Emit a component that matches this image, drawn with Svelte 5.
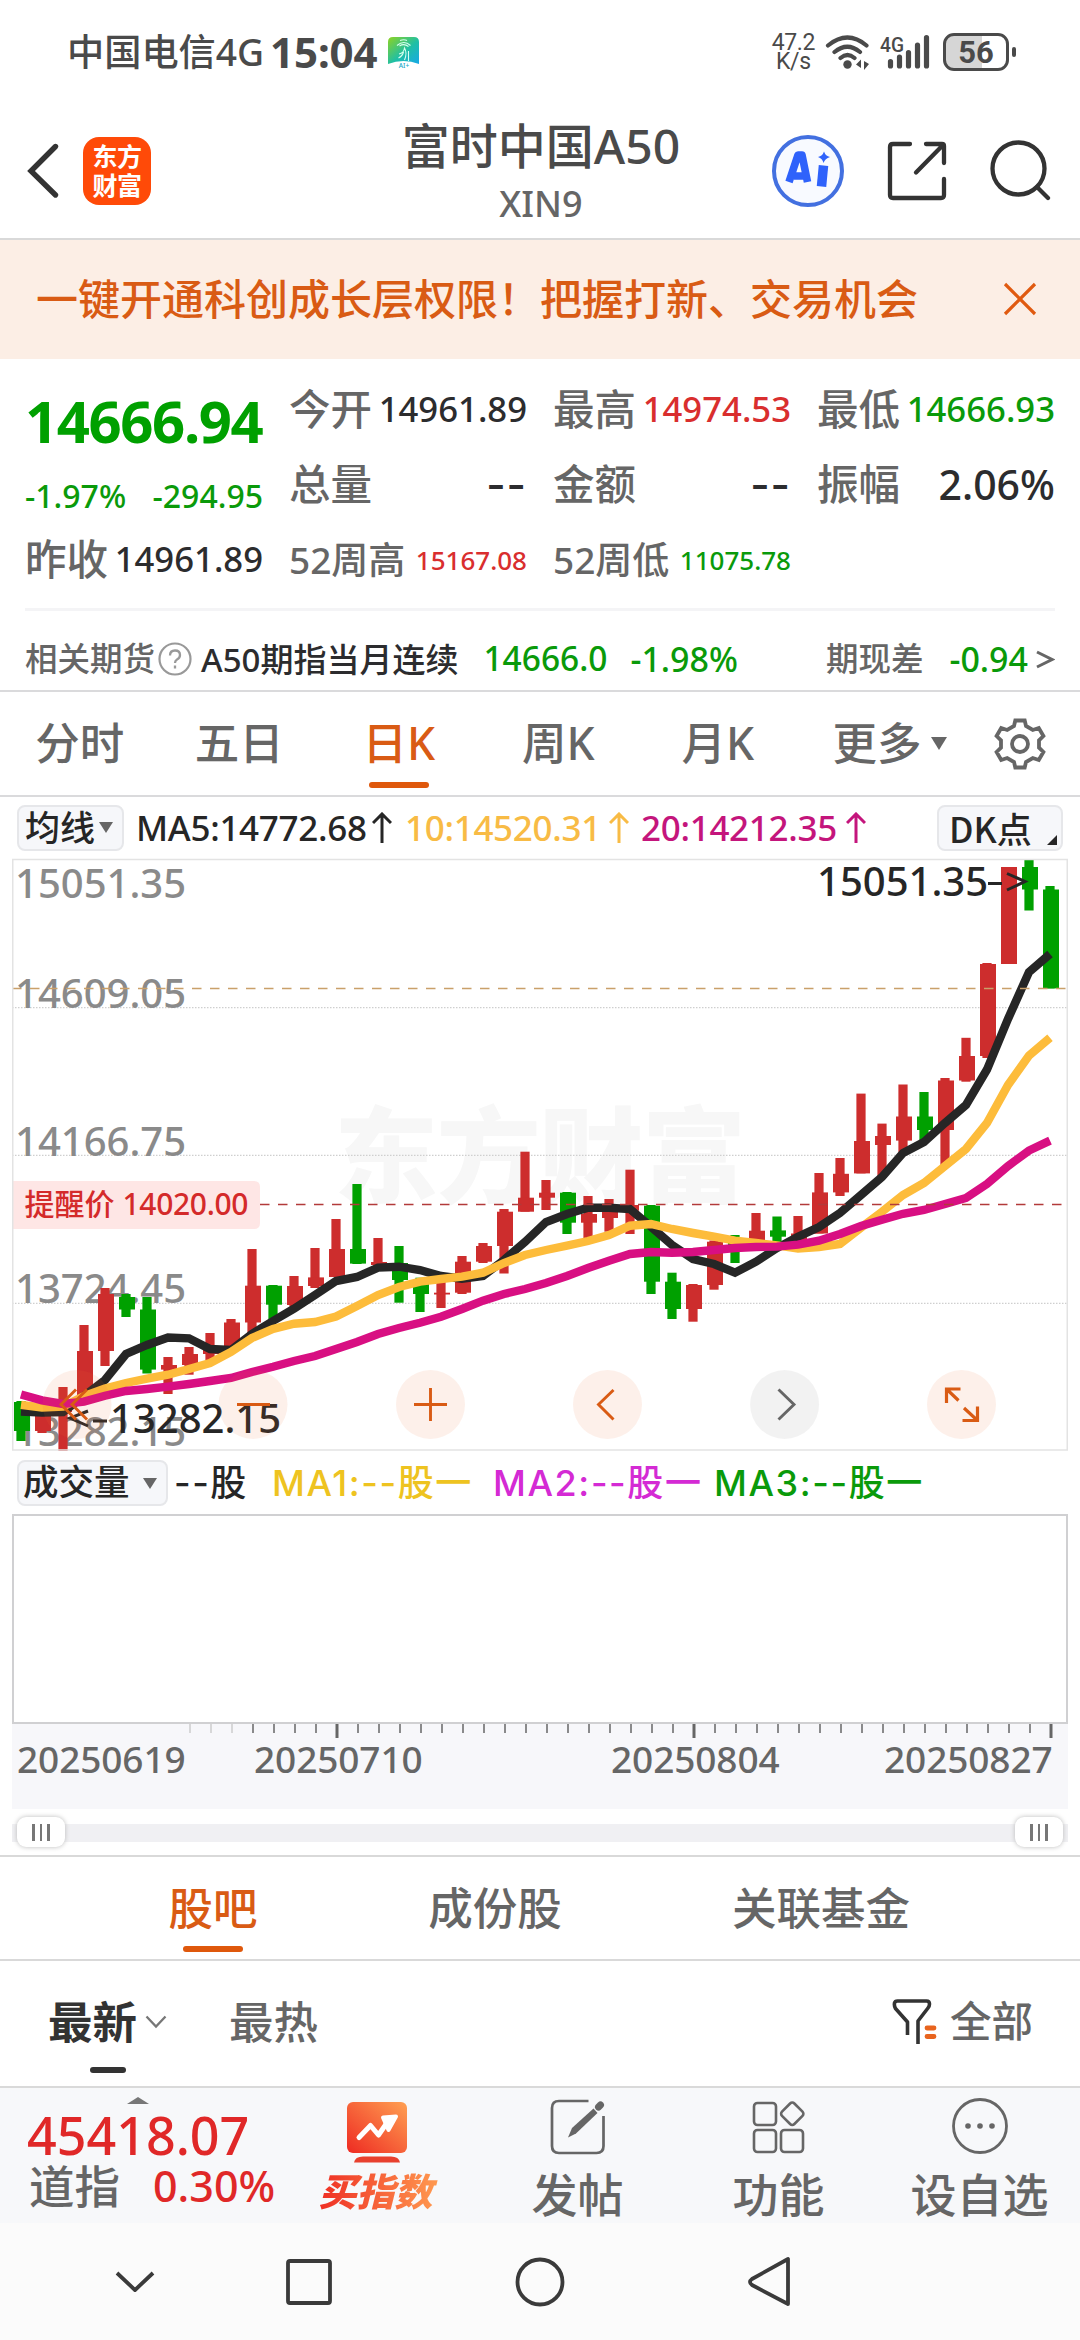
<script>
  const UP = '#cd2d2d';
  const DOWN = '#00a000';

  // [direction, body top, body bottom, wick top, wick bottom]
  const candles = [
    [0, 1402, 1431, 1401, 1441], [1, 1413, 1431, 1410, 1433], [1, 1402, 1412, 1387, 1451],
    [1, 1351, 1398, 1325, 1398], [1, 1294, 1351, 1288, 1366], [0, 1297, 1309.5, 1294, 1317],
    [0, 1309.5, 1369.6, 1297, 1373.5], [1, 1365, 1369.6, 1357, 1394], [1, 1354, 1365, 1347, 1374.7],
    [1, 1349, 1354, 1333, 1360], [1, 1322.5, 1349, 1319, 1349], [1, 1285.7, 1322.5, 1249, 1333],
    [0, 1285.7, 1304.7, 1285, 1320.5], [1, 1286, 1305, 1276, 1306.7], [1, 1277.4, 1286, 1248, 1288],
    [1, 1249, 1277, 1219, 1277], [0, 1249, 1263.6, 1184, 1264], [1, 1262, 1265, 1238, 1270],
    [0, 1263, 1280, 1246, 1302.7], [0, 1280, 1294, 1277.7, 1312], [1, 1292.7, 1294.5, 1281.7, 1308],
    [1, 1261.7, 1292.7, 1256, 1294], [1, 1246, 1261.7, 1243, 1263], [1, 1211.7, 1246, 1209, 1273.5],
    [1, 1197.7, 1211.7, 1151.7, 1211.7], [1, 1192.7, 1197.7, 1180, 1210], [0, 1192.7, 1222.7, 1192, 1234],
    [1, 1214, 1222.7, 1196, 1238], [1, 1211.7, 1218, 1199, 1231.7], [1, 1205, 1210.7, 1169.7, 1234],
    [0, 1205.7, 1281.7, 1205, 1294], [0, 1281.7, 1309, 1272.7, 1319], [1, 1285, 1309, 1284, 1321.7],
    [1, 1241.7, 1285, 1240.5, 1289.7], [0, 1240, 1247, 1235, 1263], [1, 1230.7, 1241.7, 1213, 1243],
    [0, 1230.4, 1236.7, 1216.5, 1246], [1, 1233.5, 1241, 1216, 1241], [1, 1192.4, 1233.5, 1173, 1233.5],
    [1, 1173.8, 1192.4, 1158, 1196], [1, 1141, 1173.4, 1093.6, 1173.4], [1, 1136, 1145, 1123.6, 1178],
    [1, 1116.5, 1140.6, 1084.5, 1152.5], [0, 1116.5, 1130, 1092, 1142.6], [1, 1080.5, 1130, 1078, 1166],
    [1, 1056, 1080.5, 1037.8, 1081.7], [1, 964, 1056, 963, 1058], [1, 867, 964, 867, 964],
    [0, 867, 889.5, 860, 910.5], [0, 889.5, 988.4, 886, 988.4]
  ];
  const ma5 = [1411.5, 1412.5, 1412, 1396, 1380, 1354, 1345, 1337.5, 1338.3, 1349, 1350, 1334, 1321, 1308.7, 1295, 1281, 1277, 1267.6, 1266.7, 1270, 1276, 1278.7, 1276, 1260, 1242, 1222, 1214, 1207.7, 1207.7, 1209, 1226.7, 1245, 1259, 1264, 1272.7, 1261.7, 1248, 1236.7, 1227, 1213, 1195, 1177, 1153, 1142, 1123, 1105, 1069.5, 1019, 972, 954];
  const ma10 = [1404.8, 1407.5, 1406.7, 1396, 1388.5, 1383, 1378.7, 1374.7, 1369, 1363, 1352, 1338, 1329, 1323.7, 1322, 1316.6, 1306, 1295, 1287, 1281.7, 1279, 1276.7, 1272.7, 1263, 1255, 1250, 1245.7, 1241, 1235, 1225.7, 1224, 1229, 1233, 1236.7, 1240.7, 1243, 1245.4, 1248.6, 1247, 1244, 1227.6, 1211.8, 1195, 1183, 1166, 1149, 1123, 1085, 1055.6, 1037.8];
  const ma20 = [1394.5, 1400.4, 1404, 1401.6, 1395.7, 1391, 1389, 1386.6, 1384, 1381, 1378, 1372, 1366.8, 1361, 1356, 1349, 1342, 1334, 1328, 1322.7, 1316.7, 1309, 1300.7, 1294, 1289, 1283, 1276, 1268, 1260.7, 1254, 1252, 1252.7, 1252, 1250, 1248, 1247, 1246.6, 1244.6, 1240.7, 1234, 1226, 1219.7, 1213.8, 1210, 1204, 1198, 1184, 1166, 1150.5, 1140.6];
  const cx = (i) => 21 + 21 * i;
  const points = (ys) => ys.map((y, i) => `${cx(i)},${y}`).join(' ');

  const levels = [['15051.35', 898], ['14609.05', 1008], ['14166.75', 1156], ['13724.45', 1303], ['13282.15', 1446]];
  const ticks = Array.from({ length: 42 }, (_, i) => ({
    x: 1051 - 21 * i,
    major: i % 17 === 0,
    faint: i > 38
  }));
  const quotes = [
    ['今开', '14961.89', 'dark'], ['最高', '14974.53', 'red'], ['最低', '14666.93', 'green'],
    ['总量', '--', 'dark dash'], ['金额', '--', 'dark dash'], ['振幅', '2.06%', 'dark big']
  ];
</script>

<div class="screen">
  <div class="status">
    <span class="carrier">中国电信4G</span>
    <span class="clock">15:04</span>
    <svg class="app" width="31" height="31" viewBox="0 0 31 31">
      <defs><linearGradient id="ag" x1="0" y1="0" x2="1" y2="1"><stop offset="0" stop-color="#8ed321" /><stop offset=".55" stop-color="#1fbfa5" /><stop offset="1" stop-color="#17a8e8" /></linearGradient></defs>
      <path d="M5 0h21q5 0 5 5v22q-15.500 -6 -31 0V5q0-5 5-5z" fill="url(#ag)" />
      <path d="M12 3.500q4-1.500 7 0M9 8.500q7-6 13.500 0M11.500 9q4.500-3 9 .5M11 17q5-1 5.500-6q3 5 0 12M10.500 21q4-2 5-6M20.500 14v10" fill="none" stroke="#d8fff0" stroke-width="1.100" />
      <text x="16" y="30.500" text-anchor="middle" font-size="6.500" fill="#17a8c8">AI+</text>
    </svg>
    <span class="grow"></span>
    <div class="speed"><span>47.2</span><span>K/s</span></div>
    <svg class="wifi" width="46" height="36" viewBox="0 0 46 36" fill="none" stroke="#4a4a4a" stroke-width="4.200" stroke-linecap="round">
      <path d="M3 11.500q19.500-16 38.500 0M9.500 18q12.800-10.500 25.500 0M15.500 24q7-6 14 0" />
      <circle cx="22.500" cy="30.500" r="4.200" fill="#4a4a4a" stroke="none" />
      <path d="M36 25.500v8.500l-5-3.500zM39 27v9l5-6z" fill="#4a4a4a" stroke="none" />
    </svg>
    <svg class="signal" width="52" height="36" viewBox="0 0 52 36">
      <text x="0" y="17.500" font-size="21" textLength="24" lengthAdjust="spacingAndGlyphs">4G</text>
      <path d="M10.500 32v-4.500M19.500 32v-9M28.500 32V18.500M37.500 32V11M46.500 32V3.500" stroke="#4a4a4a" stroke-width="5.200" stroke-linecap="round" />
    </svg>
    <div class="battery"><span>56</span></div><i class="nub"></i>
  </div>

  <header>
    <div class="left">
      <svg width="34" height="58" viewBox="0 0 34 58" fill="none" stroke="#333" stroke-width="5.400" stroke-linecap="round"><path d="M29.500 4.500L5 29l24.500 24" /></svg>
      <div class="logo"><span>东方</span><span>财富</span></div>
    </div>
    <div class="title"><b>富时中国A50</b><span>XIN9</span></div>
    <div class="right">
      <svg width="74" height="74" viewBox="0 0 74 74">
        <circle cx="37" cy="37" r="34" fill="#f8faff" stroke="#4370e0" stroke-width="4" />
        <path d="M18 48l9-27h4l5.500 27M23 42h12" fill="none" stroke="#2f62fb" stroke-width="7.600" stroke-linejoin="round" />
        <path d="M52.500 31.500l-2 21" stroke="#2f62fb" stroke-width="9.500" />
        <path d="M53 17.500q1.500 4.500 6 5.500q-5 1.500-6.500 6q-1-4.500-5.500-6q4.500-1 6-5.500z" fill="#2f62fb" />
      </svg>
      <svg width="60" height="60" viewBox="0 0 60 60" fill="none" stroke="#333" stroke-width="4.300" stroke-linecap="round">
        <path d="M23 3H6q-3 0-3 3v48q0 3 3 3h48q3 0 3-3V38M39 3h16q2 0 2 2v17M56 4L29 31.500" />
      </svg>
      <svg width="62" height="62" viewBox="0 0 62 62" fill="none" stroke="#333" stroke-width="4.300" stroke-linecap="round">
        <circle cx="29.500" cy="28.500" r="26" /><path d="M48 47l11 11" />
      </svg>
    </div>
  </header>

  <div class="banner">
    <span>一键开通科创成长层权限！把握打新、交易机会</span>
    <svg width="34" height="34" viewBox="0 0 34 34" stroke="#e05a10" stroke-width="3.200"><path d="M2 2l30 30M32 2L2 32" /></svg>
  </div>

  <section class="quote">
    <div class="summary">
      <strong>14666.94</strong>
      <div class="change"><span>-1.97%</span><span>-294.95</span></div>
      <div class="cell"><label>昨收</label><span class="dark">14961.89</span></div>
    </div>
    <div class="cells">
      {#each quotes as [name, value, tone]}
        <div class="cell"><label>{name}</label><span class={tone}>{value}</span></div>
      {/each}
      <div class="cell small"><label>52周高</label><span class="red">15167.08</span></div>
      <div class="cell small"><label>52周低</label><span class="green">11075.78</span></div>
    </div>
  </section>

  <div class="futures">
    <span class="gray">相关期货</span>
    <svg class="help" width="34" height="34" viewBox="0 0 34 34"><circle cx="17" cy="17" r="15.500" fill="none" stroke="#999" stroke-width="2.200" /><path d="M12 13.500q0-5 5-5t5 4.500q0 3-3 4.500q-2 1.200-2 3.500M17 23.500v3" fill="none" stroke="#999" stroke-width="2.300" /></svg>
    <span class="dark name">A50期指当月连续</span>
    <span class="green price">14666.0</span>
    <span class="green rate">-1.98%</span>
    <span class="grow"></span>
    <span class="gray">期现差</span>
    <span class="green diff">-0.94</span>
    <svg width="20" height="24" viewBox="0 0 20 24" fill="none" stroke="#666" stroke-width="3"><path d="M2 5l15 7.500L2 20" /></svg>
  </div>

  <nav class="periods">
    <span>分时</span><span>五日</span><span class="on">日K</span><span>周K</span><span>月K</span>
    <span class="more">更多<i class="tri"></i></span>
    <svg width="54" height="54" viewBox="0 0 54 54" fill="none" stroke="#666" stroke-width="3.800">
      <path d="M22.300 3.500h9.400l1.300 5.500 6.800 4 6-2 4.600 8-4.400 4.300v7.400l4.400 4.300-4.600 8-6-2-6.800 4-1.300 5.500h-9.400l-1.300-5.500-6.800-4-6 2-4.600-8 4.400-4.300v-7.400l-4.400-4.300 4.600-8 6 2 6.800-4z" />
      <circle cx="27" cy="27" r="8" />
    </svg>
  </nav>

  <div class="legend main">
    <div class="btn avg">均线<i class="tri"></i></div>
    <span class="m5">MA5:14772.68</span>
    <svg width="20" height="32" viewBox="0 0 20 32" fill="none" stroke="#262626" stroke-width="3"><path d="M10 31V3M1 11l9-9 9 9" /></svg>
    <span class="m10">10:14520.31</span>
    <svg width="20" height="32" viewBox="0 0 20 32" fill="none" stroke="#f8bb45" stroke-width="3"><path d="M10 31V3M1 11l9-9 9 9" /></svg>
    <span class="m20">20:14212.35</span>
    <svg width="20" height="32" viewBox="0 0 20 32" fill="none" stroke="#c4157c" stroke-width="3"><path d="M10 31V3M1 11l9-9 9 9" /></svg>
    <span class="grow"></span>
    <div class="btn dk">DK点<i></i></div>
  </div>

  <svg class="chart" width="1056" height="594" viewBox="12 858 1056 594">
    <text class="mark" x="334" y="1195" textLength="412">东方财富</text>
    <g stroke="#cfcfcf" stroke-width="1.200" stroke-dasharray="1.500 1.500">
      <path d="M12 1007.700h1056M12 1155.300h1056M12 1303.300h1056" />
    </g>
    <g class="level">
      {#each levels as [label, y]}<text x="15" {y}>{label}</text>{/each}
    </g>
    {#each candles as [up, top, bottom, high, low], i}
      <g fill={up ? UP : DOWN}>
        <rect x={cx(i) - 4.600} y={high} width="9.200" height={low - high} />
        <rect x={cx(i) - 7} y={top} width="16" height={bottom - top} />
      </g>
    {/each}
    <g fill="none" stroke-width="8.400">
      <polyline points={points(ma5)} stroke="#262626" />
      <polyline points={points(ma10)} stroke="#fdbc3b" />
      <polyline points={points(ma20)} stroke="#d80f82" />
    </g>
    <path d="M12 988.500h1056" stroke="#c9a06a" stroke-width="1.300" stroke-dasharray="9.500 8.500" />
    <path d="M260 1204.500h808" stroke="#b23a3a" stroke-width="1.300" stroke-dasharray="9.500 8.500" />
    <path d="M12 1181h242q6 0 6 6v36q0 6-6 6H12z" fill="#fee6e5" />
    <text class="alert" x="24.500" y="1214.500">提醒价</text>
    <text class="alert" x="122.500" y="1214.500" textLength="126">14020.00</text>
    <g class="extreme">
      <text x="817" y="896">15051.35</text>
      <text x="110" y="1433">13282.15</text>
      <path d="M988 883.500h14M1007 873.500l18 8-18 8.500M93 1421h14M88 1411l-18 7 18 8" fill="none" stroke="#262626" stroke-width="3" />
    </g>
    <rect x="12.750" y="859.500" width="1054.500" height="590.500" fill="none" stroke="#e3e3e3" stroke-width="1.500" />
    <g fill="#f07030" fill-opacity=".1">
      <circle cx="77" cy="1404.500" r="34.500" /><circle cx="253" cy="1404.500" r="34.500" />
      <circle cx="430.500" cy="1404.500" r="34.500" /><circle cx="607.500" cy="1404.500" r="34.500" />
      <circle cx="961.500" cy="1404.500" r="34.500" /><circle cx="784.600" cy="1404.500" r="34.500" fill="#000" fill-opacity=".05" />
    </g>
    <g fill="none" stroke="#d95b14" stroke-width="2.900">
      <path d="M76 1389.500l-15 15 15 15M87 1389.500l-15 15 15 15M237 1404.500h33M414 1404.500h33M430.500 1388v33M613.500 1390l-15 14.500 15 15" />
      <path d="M946.500 1403v-14h14M946.500 1389l12 11.500M977.500 1406.500v14h-15M977.500 1420.500l-13.500-12.500" stroke-width="3.200" />
      <path d="M778.500 1389.500l15.500 15-15.500 15" stroke="#666" />
    </g>
  </svg>

  <div class="legend vol">
    <div class="btn amount">成交量<i class="tri"></i></div>
    <span class="v0">--股</span><span class="v1">MA1:--股一</span><span class="v2">MA2:--股一</span><span class="v3">MA3:--股一</span>
  </div>

  <div class="volume"></div>
  <div class="axis">
    <svg width="1056" height="15" viewBox="12 0 1056 15">
      {#each ticks as t}
        <path d="M{t.x} 0v{t.major ? 14 : 9}" stroke={t.faint ? '#ccc' : '#666'} stroke-width={t.major ? 3 : 1.5} />
      {/each}
    </svg>
    <div class="dates"><span>20250619</span><span>20250710</span><span>20250804</span><span>20250827</span></div>
  </div>

  <div class="slider">
    <div class="knob"><i></i><i></i><i></i></div><div class="knob"><i></i><i></i><i></i></div>
  </div>

  <nav class="boards"><span class="on">股吧</span><span>成份股</span><span>关联基金</span></nav>

  <div class="sort">
    <div class="latest">最新</div>
    <svg class="caret" width="22" height="16" viewBox="0 0 22 16" fill="none" stroke="#777" stroke-width="2.300"><path d="M1.500 2.500L11 12.500l9.500-10" /></svg>
    <div class="hot">最热</div>
    <span class="grow"></span>
    <svg width="46" height="46" viewBox="0 0 46 46" fill="none" stroke="#333" stroke-width="3.600" stroke-linejoin="round">
      <path d="M15.500 36V23L3.500 9.500Q2 7 2.500 4q.5-2 3-2h29q3 0 3 3 0 2-1.500 4L26 22v23" />
      <path d="M35 29h7M35 37.500h7" stroke="#e8641e" stroke-width="4.800" stroke-linecap="round" />
    </svg>
    <div class="all">全部</div>
  </div>

  <footer>
    <div class="dow">
      <i class="up"></i>
      <strong>45418.07</strong>
      <div><label>道指</label><span>0.30%</span></div>
    </div>
    <div class="item buy">
      <svg width="60" height="62" viewBox="0 0 60 62">
        <defs><linearGradient id="bg" x1="0" y1="1" x2="1" y2="0"><stop offset="0" stop-color="#ee2a22" /><stop offset="1" stop-color="#ffa052" /></linearGradient></defs>
        <rect width="60" height="51" rx="6" fill="url(#bg)" />
        <path d="M7 60.500q1-6 9-6h28q8 0 9 6z" fill="#e8402e" />
        <path d="M12 35.500l11.500-12 8 9.500 9-13" fill="none" stroke="#fff" stroke-width="5" stroke-linecap="round" stroke-linejoin="round" />
        <path d="M36 15.500l13-1-7.500 13.500z" fill="#fff" stroke="#fff" stroke-width="4" stroke-linejoin="round" />
      </svg>
      <span>买指数</span>
    </div>
    <div class="item">
      <svg width="56" height="56" viewBox="0 0 56 56" fill="none" stroke="#666" stroke-width="2.700">
        <path d="M38.500 2H9Q2 2 2 9v38q0 7 7 7h37.500q7 0 7-7V17" />
        <path d="M43.500 9.500l4 4.500L26 34.500l-8 4 4-9.500z" fill="#666" stroke="none" />
        <path d="M48.500 8l2-2" stroke-width="7" stroke-linecap="round" />
      </svg>
      <span>发帖</span>
    </div>
    <div class="item">
      <svg width="54" height="56" viewBox="0 0 54 56" fill="none" stroke="#666" stroke-width="2.600">
        <rect x="2" y="4" width="22" height="22" rx="3.500" /><rect x="2" y="31" width="22" height="22" rx="3.500" /><rect x="29" y="31" width="22" height="22" rx="3.500" />
        <rect x="31.500" y="6" width="17.500" height="17.500" rx="3" transform="rotate(45 40.250 14.750)" />
      </svg>
      <span>功能</span>
    </div>
    <div class="item last">
      <svg width="58" height="58" viewBox="0 0 58 58" fill="none" stroke="#666" stroke-width="2.800">
        <circle cx="29" cy="29" r="26.500" /><g fill="#666" stroke="none"><circle cx="17" cy="29" r="2.800" /><circle cx="29" cy="29" r="2.800" /><circle cx="41" cy="29" r="2.800" /></g>
      </svg>
      <span>设自选</span>
    </div>
  </footer>

  <div class="system">
    <svg width="40" height="24" viewBox="0 0 40 24"><path d="M2 3l18 17L38 3" /></svg>
    <svg width="46" height="46" viewBox="0 0 46 46"><rect x="2" y="2" width="42" height="42" rx="2" /></svg>
    <svg width="50" height="50" viewBox="0 0 50 50"><circle cx="25" cy="25" r="22.500" /></svg>
    <svg width="46" height="52" viewBox="0 0 46 52"><path d="M41 3v45L5 29q-4-3 0-6z" /></svg>
  </div>
</div>

<style>
  :global(body) { background: #fff; }
  .screen {
    width: 1080px; height: 2340px; overflow: hidden; background: #fff;
    display: flex; flex-direction: column; color: #666; line-height: 1; white-space: nowrap;
    font-family: "Noto Sans", "Noto Sans CJK SC", sans-serif; font-weight: 500;
  }
  .screen * { box-sizing: border-box; }
  .screen > * { flex: none; }
  svg { display: block; flex: none; }
  i { display: block; flex: none; }
  .grow { flex: 1; }
  .dark { color: #2c2c2e; }
  .red { color: #d92e2e; }
  .green { color: #0a9a0a; }
  .gray { color: #666; }
  .tri { border: 8px solid transparent; border-top: 13px solid #666; border-bottom: 0; }

  .status { height: 104px; display: flex; align-items: center; padding: 0 64px 0 67px; color: #4a4a4a; }
  .carrier { font-size: 37.200px; }
  .clock { font-size: 42px; font-weight: 700; margin-left: 6px; letter-spacing: -.1px; line-height: 56px; }
  .app { margin-left: 11px; }
  .speed { display: flex; flex-direction: column; align-items: center; font-family: Roboto, sans-serif; font-weight: 400; font-size: 23px; line-height: 19px; letter-spacing: -.4px; margin-right: 10px; }
  .wifi { margin-right: 9px; }
  .signal { margin-right: 11px; overflow: visible; font-family: Roboto, sans-serif; }
  .signal text { fill: #4a4a4a; font-weight: 500; }
  .battery {
    width: 66px; height: 38px; border: 3px solid #4a4a4a; border-radius: 11px; font-family: Roboto, sans-serif; font-size: 31px; font-weight: 700;
    background: linear-gradient(90deg, #d6d6d6 60%, #fff 60%); display: flex; align-items: center; justify-content: center;
  }
  .nub { width: 4px; height: 10px; border-radius: 2px; background: #4a4a4a; margin-left: 3px; }

  header { height: 136px; border-bottom: 2px solid #d9d9d9; display: grid; grid-template-columns: 1fr auto 1fr; }
  .left { display: flex; align-items: center; padding: 0 0 1px 26px; gap: 23px; }
  .logo {
    width: 68px; height: 68px; border-radius: 16px; background: #ff4a08; color: #fff; font-weight: 700; font-size: 25px;
    display: flex; flex-direction: column; align-items: center; justify-content: center; line-height: 29px; letter-spacing: -.5px;
  }
  .title { display: flex; flex-direction: column; align-items: center; padding: 16px 0 0 2px; }
  .title b { font-size: 48px; font-weight: 500; color: #4a4a4a; line-height: 52px; }
  .title span { font-size: 36px; line-height: 40px; margin-top: 12px; }
  .right { display: flex; align-items: center; justify-content: flex-end; padding: 0 29px 0 0; gap: 42px; }

  .banner {
    height: 119px; background: #fceee5; color: #d95b14; font-size: 42px; display: flex; align-items: center;
    justify-content: space-between; padding: 0 43px 2px 36px;
  }

  .quote { height: 249px; display: flex; padding: 13px 25px 0; gap: 26px; }
  .summary { width: 238px; display: grid; grid-template-rows: 97px 53px 75px; align-items: center; }
  .summary strong { font-size: 58px; color: #00a000; letter-spacing: -1.400px; }
  .change { display: flex; justify-content: space-between; color: #0a9a0a; font-size: 32px; }
  .cells { display: grid; grid-template-columns: repeat(3, 238px); grid-template-rows: repeat(3, 75px); column-gap: 26px; }
  .cell { display: flex; align-items: center; justify-content: space-between; font-size: 34.700px; }
  .cell label { font-size: 41.500px; }
  .cell .big { font-size: 41px; }
  .cell .dash { font-family: Inter, sans-serif; font-size: 42px; letter-spacing: 1px; }
  .small label { font-size: 37px; }
  .small span { font-size: 26px; }

  .futures {
    height: 84px; margin: 0; border-bottom: 2px solid #dadadc; padding: 20px 25px 0; font-size: 32.500px;
    display: flex; align-items: center; background: linear-gradient(#f4f4f6, #f4f4f6) 25px 0 / 1030px 3px no-repeat;
  }
  .help { margin-left: 3px; }
  .futures .name { margin-left: 9px; font-size: 33px; }
  .futures .price { margin-left: 25px; font-size: 33.500px; }
  .futures .rate { margin-left: 23px; font-size: 34px; }
  .futures .diff { margin: 0 7px 0 26px; font-size: 34px; }

  .periods { height: 105px; border-bottom: 2px solid #dadadc; display: flex; align-items: center; font-size: 44.500px; }
  .periods span { width: 159.500px; height: 103px; display: flex; align-items: center; justify-content: center; }
  .periods .more { width: 184px; gap: 9px; }
  .periods svg { margin-left: 11px; }
  .on { color: #d95b14; position: relative; }
  .on::after { content: ""; position: absolute; bottom: 7px; left: 50%; width: 60px; height: 6px; margin-left: -30px; border-radius: 3px; background: #df580c; }

  .legend { height: 61px; display: flex; align-items: center; font-size: 35px; color: #262626; padding: 0 17px; }
  .btn { height: 46px; border: 2px solid #e6e7ea; border-radius: 8px; background: #f6f7fa; display: flex; align-items: center; }
  .avg { width: 107px; padding-left: 6px; gap: 4px; letter-spacing: 0; }
  .avg .tri, .amount .tri { border-width: 11px 7px 0; }
  .m5 { width: 235px; margin-left: 12px; letter-spacing: -.3px; }
  .main svg + span { letter-spacing: -.3px; }
  .m10 { color: #f8bb45; margin-left: 13px; width: 204px; }
  .m20 { color: #c4157c; margin-left: 12px; width: 205px; }
  .m5 + svg { margin-left: 1px; }
  .dk { width: 126px; padding-left: 10px; justify-content: space-between; font-family: "Noto Sans CJK SC", sans-serif; }
  .dk i { border: 5.500px solid #262626; border-top-color: transparent; border-left-color: transparent; align-self: flex-end; margin: 0 4px 4px 0; }

  .chart { margin-left: 12px; font-size: 40px; }
  .mark { font-size: 104px; font-weight: 900; fill: #f7f7f7; }
  .level { fill: #8a8a8a; }
  .alert { font-size: 30px; fill: #d42a2a; }
  .extreme { fill: #262626; }

  .vol { height: 62px; font-family: Inter, "Noto Sans CJK SC", sans-serif; }
  .amount { width: 151px; padding-left: 4px; gap: 13px; font-size: 35.500px; }
  .v0 { margin-left: 6px; width: 98px; font-size: 36px; letter-spacing: 1.500px; }
  .v1, .v2, .v3 { width: 221px; font-size: 36px; letter-spacing: 1.600px; }
  .v1 { color: #eec320; }
  .v2 { color: #d42ad4; }
  .v3 { color: #0a9a0a; }

  .volume { width: 1056px; height: 210px; margin-left: 12px; border: 2px solid #d0d0d2; }
  .axis { width: 1056px; height: 85px; margin-left: 12px; background: #f7f7fa; }
  .dates { display: flex; font-size: 37px; line-height: 40px; padding-left: 5px; letter-spacing: -.1px; }
  .dates span:nth-child(1) { width: 237px; }
  .dates span:nth-child(2) { width: 357px; }
  .dates span:nth-child(3) { width: 273px; }

  .slider { height: 48px; display: flex; align-items: center; justify-content: space-between; padding: 0 17px; background: linear-gradient(#f0f0f3, #f0f0f3) 12px 15px / 1056px 18px no-repeat; border-bottom: 2px solid #d9d9d9; }
  .knob { width: 48px; height: 30px; border-radius: 9px; background: #fff; box-shadow: 0 0 5px #bbb; display: flex; gap: 5px; align-items: center; justify-content: center; }
  .knob i { width: 2.500px; height: 17px; background: #777; }

  .boards { height: 104px; border-bottom: 2px solid #d9d9d9; display: flex; font-size: 44.500px; padding-left: 72px; }
  .boards span { width: 282px; display: flex; align-items: center; justify-content: center; }
  .boards span:last-child { width: 370px; }

  .sort { height: 127px; border-bottom: 2px solid #d9d9d9; display: flex; align-items: center; padding: 0 47px 3px 48px; font-size: 44.500px; }
  .latest { color: #333; font-weight: 700; position: relative; }
  .latest::after { content: ""; position: absolute; left: 42px; bottom: -29px; width: 36px; height: 6px; border-radius: 3px; background: #333; }
  .caret { margin: 0 62px 0 8px; }
  .all { font-size: 41.500px; margin-left: 12px; }

  footer { height: 135px; background: #f7f8fa; display: flex; }
  .dow { width: 276px; padding-left: 27px; display: flex; flex-direction: column; color: #e02828; }
  .dow .up { width: 22px; border: 11px solid transparent; border-bottom: 7px solid #777; border-top: 0; margin: 9px 0 0 100px; }
  .dow strong { font-size: 52px; font-weight: 500; line-height: 54px; margin-top: 4px; }
  .dow div { display: flex; align-items: center; line-height: 48px; }
  .dow label { font-size: 45.500px; color: #666; margin: 0 33px 0 2px; }
  .dow span { font-size: 43px; }
  .item { width: 201px; display: flex; flex-direction: column; align-items: center; font-size: 46px; padding-top: 11px; }
  .item span { margin-top: auto; line-height: 58px; }
  .buy { padding: 14px 0 6px; }
  .buy span { font-size: 38px; font-weight: 900; font-style: italic; line-height: 52px; background: linear-gradient(90deg, #ee2a22, #ff9a50); background-clip: text; -webkit-background-clip: text; color: transparent; padding: 0 6px 0 4px; }
  .last { padding-top: 9px; }

  .system { height: 118px; background: #fbfbfb; display: flex; align-items: center; padding: 0 0 1px 115px; }
  .system svg { fill: none; stroke: #3a3a3a; stroke-width: 3.800; stroke-linejoin: round; }
  .system svg:nth-child(2) { margin-left: 131px; }
  .system svg:nth-child(3) { margin-left: 183px; }
  .system svg:nth-child(4) { margin-left: 182px; }
</style>
